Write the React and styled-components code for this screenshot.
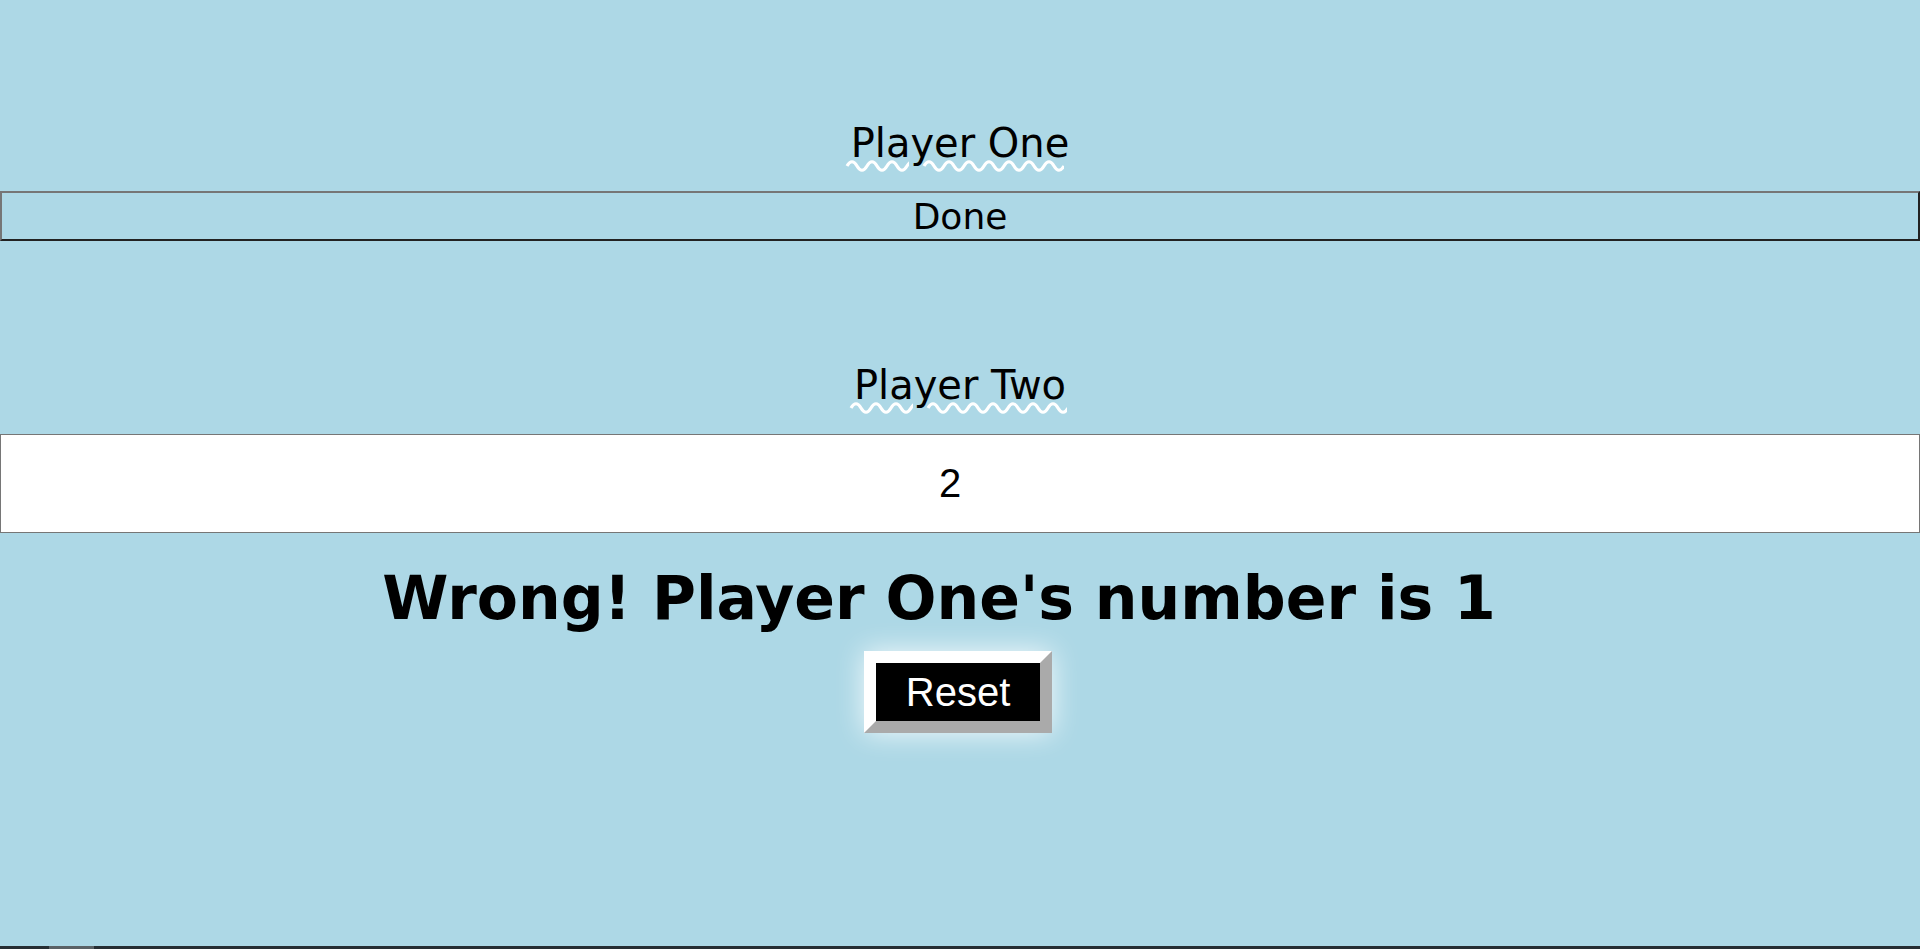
import React from "react";
import styled, { createGlobalStyle } from "styled-components";

const Global = createGlobalStyle`
  html, body { margin: 0; padding: 0; background: #add8e6; }
  body { font-family: "DejaVu Sans", Verdana, sans-serif; color: #000; overflow: hidden; }
  * { box-sizing: border-box; }
`;

const Page = styled.div`
  min-height: 100vh;
  display: flex;
  flex-direction: column;
`;

const Main = styled.main`
  flex: 1;
  display: flex;
  flex-direction: column;
  align-items: center;
  padding-top: 120px;
`;

const Label = styled.div`
  position: relative;
  font-size: 40px;
  line-height: 47px;
  text-align: center;
  margin-bottom: ${(p) => p.$gap}px;
`;

const SquiggleSvg = styled.svg`
  position: absolute;
  top: 40px;
  height: 12px;
  overflow: visible;
  pointer-events: none;
`;

function Squiggle({ left, width }) {
  const period = 20;
  let d = "M0 6";
  for (let x = 0; x < width; x += period) {
    d += ` Q${x + period / 4} -2.5 ${x + period / 2} 6 T${x + period} 6`;
  }
  const id = `sq${left}-${width}`;
  return (
    <SquiggleSvg
      width={width}
      viewBox={`0 0 ${width} 12`}
      style={{ left }}
      aria-hidden="true"
    >
      <clipPath id={id}>
        <rect x="-2" y="-3" width={width + 2} height="18" />
      </clipPath>
      <path
        d={d}
        fill="none"
        stroke="#fff"
        strokeWidth="3.2"
        strokeLinejoin="round"
        clipPath={`url(#${id})`}
      />
    </SquiggleSvg>
  );
}

const DoneButton = styled.button`
  width: 100%;
  height: 50px;
  background: transparent;
  border: 2px solid;
  border-color: #767676 #222 #222 #767676;
  font-family: "DejaVu Sans", Verdana, sans-serif;
  font-size: 36px;
  color: #000;
  padding: 0;
  margin-bottom: 121px;
`;

const NumberInput = styled.input`
  width: 100%;
  height: 99px;
  background: #fff;
  border: 1px solid #767676;
  font-family: "Liberation Sans", Arial, sans-serif;
  font-size: 40px;
  text-align: center;
  padding: 0 20px 0 0;
  color: #000;
  outline: none;
`;

const Result = styled.h1`
  margin: 30px 0 18px;
  padding-right: 42px;
  font-size: 60px;
  line-height: 70px;
  font-weight: bold;
  text-align: center;
`;

const ResetButton = styled.button`
  background: #000;
  color: #fff;
  font-family: "Liberation Sans", Arial, sans-serif;
  font-size: 40px;
  line-height: 44px;
  padding: 7px 0;
  width: 188px;
  height: 82px;
  margin-right: 4px;
  border: 12px solid;
  border-color: #fff #aaa #aaa #fff;
  box-shadow: 0 0 28px rgba(255, 255, 255, 0.85);
`;

const Scrollbar = styled.div`
  height: 3px;
  background: #262e33;
  display: flex;
`;

const Thumb = styled.div`
  margin-left: 49px;
  width: 45px;
  background: #5a6266;
`;

export default function App() {
  return (
    <Page>
      <Global />
      <Main>
        <Label $gap={24}>
          Player One
          <Squiggle left={-4} width={62} />
          <Squiggle left={73} width={140} />
        </Label>
        <DoneButton>Done</DoneButton>
        <Label $gap={25}>
          Player Two
          <Squiggle left={-3} width={62} />
          <Squiggle left={74} width={139} />
        </Label>
        <NumberInput defaultValue="2" readOnly />
        <Result>Wrong! Player One's number is 1</Result>
        <ResetButton>Reset</ResetButton>
      </Main>
      <Scrollbar>
        <Thumb />
      </Scrollbar>
    </Page>
  );
}
